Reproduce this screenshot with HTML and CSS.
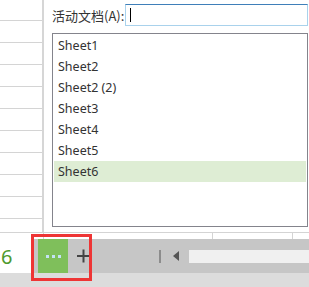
FILE: index.html
```html
<!DOCTYPE html>
<html lang="zh-CN">
<head>
    <meta charset="UTF-8">
    <meta name="viewport" content="width=device-width, initial-scale=1.0">
    <title>激活文档</title>
    <link rel="stylesheet" href="styles.css">
</head>
<body>
    <div class="top">
        <div class="grid"></div>
        <div class="dialog">
            <div class="field">
                <label for="activeDoc">活动文档(A):</label>
                <div class="input"><span class="caret"></span></div>
            </div>
            <ul class="list">
                <li>Sheet1</li>
                <li>Sheet2</li>
                <li>Sheet2 (2)</li>
                <li>Sheet3</li>
                <li>Sheet4</li>
                <li>Sheet5</li>
                <li class="selected">Sheet6</li>
            </ul>
        </div>
    </div>

    <div class="strip">
        <span class="tick t1"></span>
        <span class="tick t2"></span>
        <span class="tick t3"></span>
    </div>

    <div class="tabbar">
        <div class="tab-active"><span>6</span></div>
        <div class="more"><i></i><i></i><i></i></div>
        <div class="add">
            <svg width="14" height="14" viewBox="0 0 14 14"><path d="M0 7H13M6.5 0.5V13.5" stroke="#444" stroke-width="2"/></svg>
        </div>
        <div class="sep"></div>
        <div class="arrow">
            <svg width="6" height="10" viewBox="0 0 6 10"><path d="M6 0V10L0 5Z" fill="#555"/></svg>
        </div>
        <div class="track"></div>
    </div>
    <div class="status"></div>

    <div class="highlight"></div>
</body>
</html>
```

FILE: styles.css
```css
body { margin: 0; width: 309px; height: 287px; overflow: hidden; position: relative; background: #fff; font-family: "Noto Sans", "Noto Sans CJK SC", sans-serif; color: #333; }
.top { display: flex; height: 232px; }
.grid { width: 42px; border-right: 2px solid #d6d6d6; background: repeating-linear-gradient(to bottom, transparent 0 20px, #d4d4d4 20px 21px, transparent 21px 22px); }
.dialog { flex: 1; padding: 4px 1px 0 8px; }
.field { display: flex; align-items: center; height: 22px; }
.field label { font-size: 13px; width: 73px; font-family: "Noto Sans CJK SC", sans-serif; }
.input { flex: 1; height: 20px; border: 1px solid #a9d2ec; border-top-color: #3f7fb9; display: flex; align-items: center; padding-left: 4px; }
.caret { width: 1px; height: 14px; background: #000; }
.list { list-style: none; margin: 7px 0 0; padding: 1px; height: 190px; border: 1px solid #84848c; }
.list li { height: 21px; line-height: 21px; padding-left: 4px; font-size: 12.5px; }
.list li.selected { background: #deedd4; }
.strip { height: 6px; border-top: 1px solid #d4d4d4; position: relative; }
.tick { position: absolute; top: 0; width: 1px; height: 6px; background: #d4d4d4; }
.t1 { left: 43px; }
.t2 { left: 212px; }
.t3 { left: 292px; }
.tabbar { display: flex; align-items: center; height: 34px; background: #c6c6c6; }
.tab-active { width: 33px; height: 100%; background: #fff; display: flex; align-items: center; font-size: 20px; color: #4e9a2e; }
.tab-active span { margin-left: 1px; }
.more { width: 30px; height: 100%; margin-left: 5px; background: #7fbf5b; display: flex; align-items: center; justify-content: center; gap: 3px; }
.more i { width: 3px; height: 3px; background: #c4e2f5; }
.add { margin-left: 9px; display: flex; }
.sep { width: 2px; height: 13px; background: #8c8c8c; margin-left: 68px; }
.arrow { margin-left: 12px; display: flex; }
.track { flex: 1; height: 13px; background: #f0f0f0; margin-left: 10px; }
.status { height: 14px; background: #dcdcdc; }
.highlight { position: absolute; left: 31px; top: 234px; width: 55px; height: 41px; border: 3px solid #ee3535; }
```
